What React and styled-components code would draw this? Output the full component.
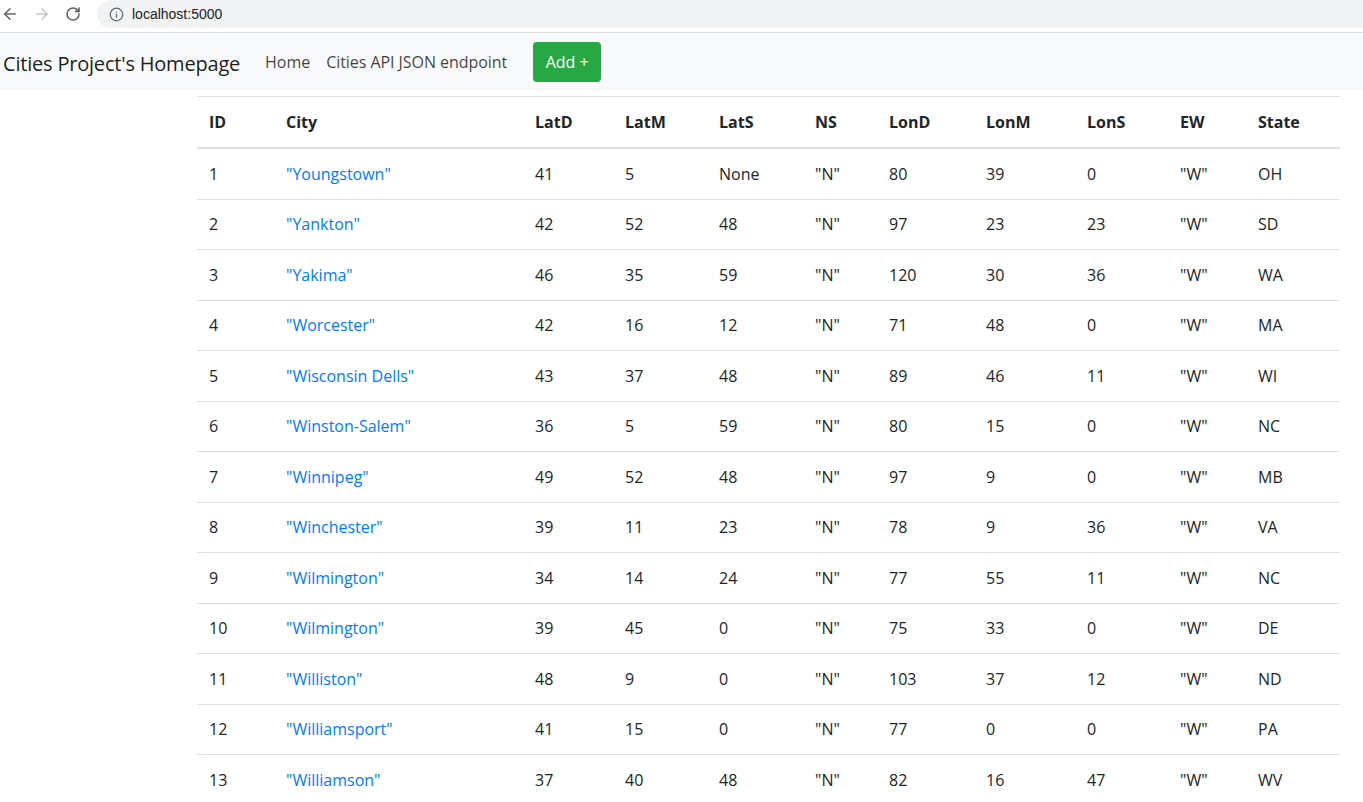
import styled, { createGlobalStyle } from "styled-components";
import { ArrowLeft, ArrowRight, RotateCw, Info } from "lucide-react";

const GlobalStyle = createGlobalStyle`
    body {
        margin: 0;
        font-family: "Open Sans", "Noto Sans", sans-serif;
        color: #212529;
        background: #fff;
        overflow: hidden;
    }
`

const cities = [
    [1, "Youngstown", 41, 5, "None", 80, 39, 0, "OH"],
    [2, "Yankton", 42, 52, 48, 97, 23, 23, "SD"],
    [3, "Yakima", 46, 35, 59, 120, 30, 36, "WA"],
    [4, "Worcester", 42, 16, 12, 71, 48, 0, "MA"],
    [5, "Wisconsin Dells", 43, 37, 48, 89, 46, 11, "WI"],
    [6, "Winston-Salem", 36, 5, 59, 80, 15, 0, "NC"],
    [7, "Winnipeg", 49, 52, 48, 97, 9, 0, "MB"],
    [8, "Winchester", 39, 11, 23, 78, 9, 36, "VA"],
    [9, "Wilmington", 34, 14, 24, 77, 55, 11, "NC"],
    [10, "Wilmington", 39, 45, 0, 75, 33, 0, "DE"],
    [11, "Williston", 48, 9, 0, 103, 37, 12, "ND"],
    [12, "Williamsport", 41, 15, 0, 77, 0, 0, "PA"],
    [13, "Williamson", 37, 40, 48, 82, 16, 47, "WV"],
]

const columns = [
    ["ID", 77], ["City", 249], ["LatD", 90], ["LatM", 94], ["LatS", 96], ["NS", 74],
    ["LonD", 97], ["LonM", 101], ["LonS", 93], ["EW", 78], ["State", 94],
]

const Chrome = styled.div`
    height: 33px;
    display: flex;
    align-items: flex-start;
    border-bottom: 1px solid #dadce0;
    box-sizing: border-box;
`

const NavIcons = styled.div`
    display: flex;
    align-items: center;
    height: 28px;
    gap: 14px;
    padding-left: 1px;
    width: 96px;
`

const IconBtn = styled.span`
    display: flex;
    color: ${p => p.$dim ? "#c4c7ca" : "#5f6368"};
`

const Omnibox = styled.div`
    flex: 1;
    height: 28px;
    background: #f1f3f4;
    border-radius: 14px 0 0 14px;
    display: flex;
    align-items: center;
    padding-left: 12px;
    gap: 8px;
    font-family: "Liberation Sans", Arial, sans-serif;
    font-size: 14px;
    color: #202124;
`

const Navbar = styled.nav`
    height: 58px;
    background: #f8f9fa;
    display: flex;
    align-items: center;
    padding-left: 3px;
`

const Brand = styled.a`
    font-size: 20px;
    letter-spacing: -0.2px;
    color: rgba(0,0,0,.9);
    margin-right: 17px;
    margin-top: 2px;
`

const NavLink = styled.a`
    font-size: 16px;
    color: rgba(0,0,0,.75);
    padding: 0 8px;
    letter-spacing: -0.05px;
`

const AddButton = styled.button`
    margin-left: 18px;
    width: 68px;
    height: 40px;
    padding: 0;
    border: none;
    border-radius: 4px;
    background: #28a745;
    color: #fff;
    font-family: inherit;
    font-size: 16px;
`

const Content = styled.div`
    padding: 5px 23px 0 197px;
`

const Table = styled.table`
    width: 100%;
    border-collapse: collapse;
    table-layout: fixed;
    font-size: 16px;
    line-height: 24px;
`

const Th = styled.th`
    text-align: left;
    font-weight: 700;
    padding: 13px 12px;
    border-top: 1px solid #dee2e6;
    border-bottom: 2px solid #dee2e6;
`

const Td = styled.td`
    padding: 12.75px 12px;
    border-top: 1px solid #dee2e6;
    white-space: nowrap;
`

const CityLink = styled.a`
    color: #007bff;
    text-decoration: none;
`

export default function App() {
    return (
        <>
            <GlobalStyle />
            <Chrome>
                <NavIcons>
                    <IconBtn><ArrowLeft size={18} strokeWidth={2} /></IconBtn>
                    <IconBtn $dim><ArrowRight size={18} strokeWidth={2} /></IconBtn>
                    <IconBtn><RotateCw size={16} strokeWidth={2.4} /></IconBtn>
                </NavIcons>
                <Omnibox>
                    <IconBtn><Info size={15} strokeWidth={2} /></IconBtn>
                    localhost:5000
                </Omnibox>
            </Chrome>
            <Navbar>
                <Brand>Cities Project's Homepage</Brand>
                <NavLink>Home</NavLink>
                <NavLink>Cities API JSON endpoint</NavLink>
                <AddButton>Add +</AddButton>
            </Navbar>
            <Content>
                <Table>
                    <colgroup>
                        {columns.map(([name, w]) => <col key={name} style={{ width: w }} />)}
                    </colgroup>
                    <thead>
                        <tr>
                            {columns.map(([name]) => <Th key={name}>{name}</Th>)}
                        </tr>
                    </thead>
                    <tbody>
                        {cities.map(([id, city, latD, latM, latS, lonD, lonM, lonS, state]) => (
                            <tr key={id}>
                                <Td>{id}</Td>
                                <Td><CityLink href="#">"{city}"</CityLink></Td>
                                <Td>{latD}</Td>
                                <Td>{latM}</Td>
                                <Td>{latS}</Td>
                                <Td>"N"</Td>
                                <Td>{lonD}</Td>
                                <Td>{lonM}</Td>
                                <Td>{lonS}</Td>
                                <Td>"W"</Td>
                                <Td>{state}</Td>
                            </tr>
                        ))}
                    </tbody>
                </Table>
            </Content>
        </>
    )
}
